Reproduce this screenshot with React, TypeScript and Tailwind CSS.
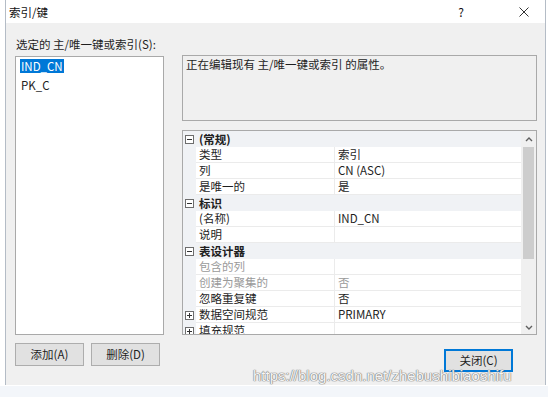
import React from 'react';

type Row =
  | { kind: 'cat'; label: string }
  | { kind: 'prop'; name: string; value: string; disabled?: boolean; expander?: boolean };

const ROWS: Row[] = [
  { kind: 'cat', label: '(常规)' },
  { kind: 'prop', name: '类型', value: '索引' },
  { kind: 'prop', name: '列', value: 'CN (ASC)' },
  { kind: 'prop', name: '是唯一的', value: '是' },
  { kind: 'cat', label: '标识' },
  { kind: 'prop', name: '(名称)', value: 'IND_CN' },
  { kind: 'prop', name: '说明', value: '' },
  { kind: 'cat', label: '表设计器' },
  { kind: 'prop', name: '包含的列', value: '', disabled: true },
  { kind: 'prop', name: '创建为聚集的', value: '否', disabled: true },
  { kind: 'prop', name: '忽略重复键', value: '否' },
  { kind: 'prop', name: '数据空间规范', value: 'PRIMARY', expander: true },
  { kind: 'prop', name: '填充规范', value: '', expander: true },
];

const BoxGlyph: React.FC<{ plus?: boolean }> = ({ plus }) => (
  <svg width="9" height="9" viewBox="0 0 9 9" className="shrink-0">
    <rect x="0.5" y="0.5" width="8" height="8" fill="white" stroke="#6d6d6d" />
    <line x1="2" y1="4.5" x2="7" y2="4.5" stroke="#333" />
    {plus && <line x1="4.5" y1="2" x2="4.5" y2="7" stroke="#333" />}
  </svg>
);

const Chevron: React.FC<{ down?: boolean }> = ({ down }) => (
  <svg width="8" height="5" viewBox="0 0 8 5">
    <path d={down ? 'M1 1 L4 4 L7 1' : 'M1 4 L4 1 L7 4'} fill="none" stroke="#606060" strokeWidth="1.4" />
  </svg>
);

const PropertyGrid: React.FC = () => (
  <div className="mt-[9px] h-[205px] border border-[#a9a9a9] bg-white flex overflow-hidden">
    <div className="flex-1 overflow-hidden">
      {ROWS.map((row, i) =>
        row.kind === 'cat' ? (
          <div key={i} className="flex h-[16px] bg-[#f0f2f5]">
            <div className="w-[13px] flex items-center justify-center">
              <BoxGlyph />
            </div>
            <div className="pl-[3px] font-bold text-[#202020] leading-[16px]">{row.label}</div>
          </div>
        ) : (
          <div key={i} className="flex h-[16px]">
            <div className="w-[13px] bg-[#f0f2f5] flex items-center justify-center">
              {row.expander && <BoxGlyph plus />}
            </div>
            <div
              className={`w-[139px] pl-[3px] leading-[15px] border-r border-b border-[#ebebeb] ${
                row.disabled ? 'text-[#9a9a9a]' : 'text-[#1e1e1e]'
              }`}
            >
              {row.name}
            </div>
            <div
              className={`flex-1 pl-[3px] leading-[15px] border-b border-[#ebebeb] ${
                row.disabled ? 'text-[#9a9a9a]' : 'text-[#1e1e1e]'
              }`}
            >
              {row.value}
            </div>
          </div>
        )
      )}
    </div>
    {/* scrollbar */}
    <div className="w-[15px] bg-[#f0f0f0] flex flex-col items-center">
      <div className="h-[16px] flex items-center justify-center">
        <Chevron />
      </div>
      <div className="w-[11px] h-[112px] bg-[#cdcdcd]" />
      <div className="flex-1" />
      <div className="h-[14px] flex items-center justify-center">
        <Chevron down />
      </div>
    </div>
  </div>
);

const Button: React.FC<{ label: string; primary?: boolean; className?: string }> = ({ label, primary, className }) => (
  <div
    className={`h-[23px] w-[69px] bg-[#e1e1e1] flex items-center justify-center text-[#1e1e1e] ${
      primary ? 'border-2 border-[#0078d7]' : 'border border-[#adadad]'
    } ${className ?? ''}`}
  >
    {label}
  </div>
);

export default function App() {
  return (
    <div className="w-[548px] h-[397px] bg-white relative overflow-hidden text-[11.5px] font-['Microsoft_YaHei','Noto_Sans_CJK_SC',sans-serif]">
      {/* Dialog window */}
      <div className="ml-[5px] w-[541px] h-[385px] border-l border-r border-[#b4bcc6] flex flex-col">
        {/* title bar */}
        <div className="h-[23px] bg-white flex items-center pl-[3px] pr-[16px] text-[#111]">
          <span className="leading-[14px]">索引/键</span>
          <span className="ml-auto text-[12px] mr-[55px]">?</span>
          <svg width="10" height="10" viewBox="0 0 10 10">
            <path d="M0.5 0.5 L9.5 9.5 M9.5 0.5 L0.5 9.5" stroke="#333" strokeWidth="1" />
          </svg>
        </div>

        {/* body */}
        <div className="flex-1 bg-[#f0f0f0] flex pl-[9px] pt-[13px]">
          {/* left column */}
          <div className="w-[149px] flex flex-col">
            <div className="h-[20px] leading-[16px] pl-[1px] text-[#1e1e1e]">选定的 主/唯一键或索引(S):</div>
            <div className="h-[279px] border border-[#a9a9a9] bg-white pt-[1px] pl-[4px]">
              <div className="inline-block bg-[#0078d7] text-white leading-[14px] px-[1px]">IND_CN</div>
              <div className="leading-[14px] mt-[3px] text-[#1e1e1e] pl-[1px]">PK_C</div>
            </div>
            <div className="flex gap-[7px] mt-[8px]">
              <Button label="添加(A)" />
              <Button label="删除(D)" />
            </div>
          </div>

          {/* right column */}
          <div className="w-[355px] ml-[18px] flex flex-col pt-[19px]">
            <div className="h-[66px] border border-[#a9a9a9] bg-[#f0f0f0] px-[3px] pt-[1px] leading-[14px] text-[#1e1e1e]">
              正在编辑现有 主/唯一键或索引 的属性。
            </div>
            <PropertyGrid />
            <div className="flex justify-end mt-[14px] mr-[24px]">
              <Button label="关闭(C)" primary />
            </div>
          </div>
        </div>
      </div>
      {/* page strip below the dialog */}
      <div className="mt-[1px] h-[11px] bg-[#f3f6fa]" />

      {/* watermark */}
      <div className="absolute left-[253px] top-[367px] text-[15px] leading-[18px] font-['Liberation_Sans',sans-serif] text-[#f4f4f4] [text-shadow:0_0_1px_#7a7a7a,0_0_1px_#7a7a7a,0_0_1px_#7a7a7a]">
        https://blog.csdn.net/zhebushibiaoshifu
      </div>
    </div>
  );
}
